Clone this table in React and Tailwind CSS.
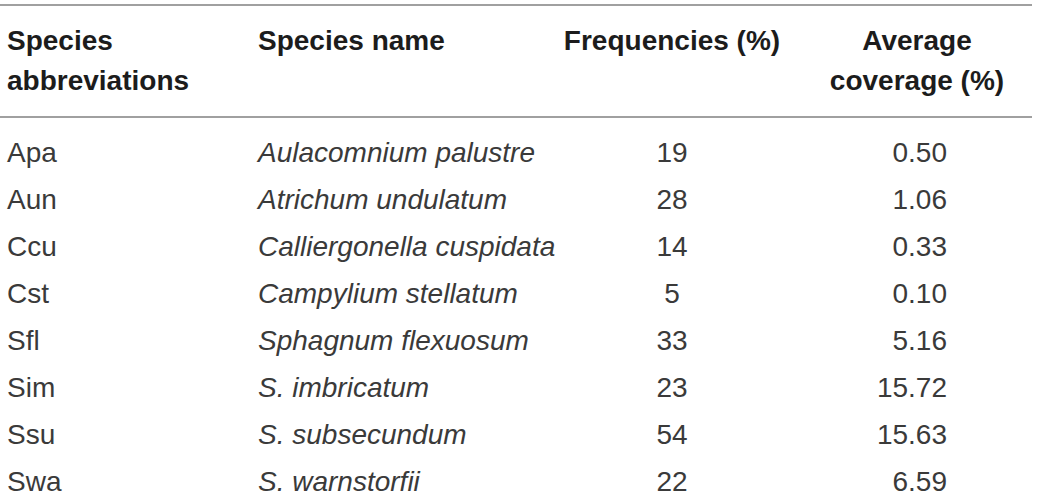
export default function App() {
  const rows = [
    ["Apa", "Aulacomnium palustre", "19", "0.50"],
    ["Aun", "Atrichum undulatum", "28", "1.06"],
    ["Ccu", "Calliergonella cuspidata", "14", "0.33"],
    ["Cst", "Campylium stellatum", "5", "0.10"],
    ["Sfl", "Sphagnum flexuosum", "33", "5.16"],
    ["Sim", "S. imbricatum", "23", "15.72"],
    ["Ssu", "S. subsecundum", "54", "15.63"],
    ["Swa", "S. warnstorfii", "22", "6.59"],
  ];
  return (
    <div
      className="w-[1040px] h-[499px] overflow-hidden bg-white pt-[4px]"
      style={{ fontFamily: '"Liberation Sans", Arial, sans-serif' }}
    >
      <div className="w-[1032px]">
        <div className="grid grid-cols-[258px_302px_224px_248px] border-t-2 border-b-2 border-[#a0a0a0] py-[15px] text-[28px] leading-[40px] font-bold text-[#1c1c1c]">
          <div className="pl-[7px]">
            Species
            <br />
            abbreviations
          </div>
          <div>Species name</div>
          <div className="text-center">Frequencies (%)</div>
          <div className="pl-[18px] text-center">
            Average
            <br />
            coverage (%)
          </div>
        </div>
        <div className="pt-[11px] text-[28px] leading-[47px] text-[#3a3a3a]">
          {rows.map((r) => (
            <div
              key={r[0]}
              className="grid grid-cols-[258px_302px_224px_248px]"
            >
              <div className="pl-[7px]">{r[0]}</div>
              <div className="italic whitespace-nowrap">{r[1]}</div>
              <div className="text-center">{r[2]}</div>
              <div className="text-right pr-[85px]">{r[3]}</div>
            </div>
          ))}
        </div>
      </div>
    </div>
  );
}
